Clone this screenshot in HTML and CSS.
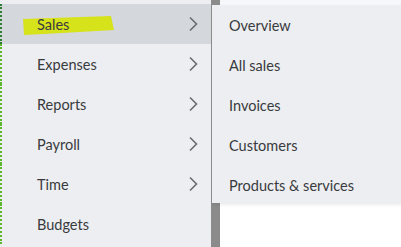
FILE: index.html
```html
<!DOCTYPE html>
<html lang="en">
<head>
    <meta charset="UTF-8">
    <title>Sales menu</title>
    <link rel="stylesheet" href="styles.css">
</head>
<body>

<div class="page">
    <nav class="menu">
        <a class="item active" href="#">
            <svg class="marker" width="94" height="20" viewBox="0 0 94 20"><polygon points="1,3 89,0 92,14 40,17 2,19" fill="#d6e21a"/></svg>
            <span class="label">Sales</span>
            <svg class="chev" width="10" height="16" viewBox="0 0 10 16"><path d="M2 1.5 L8.5 8 L2 14.5" fill="none" stroke="#6b6c72" stroke-width="1.6"/></svg>
        </a>
        <a class="item" href="#">
            <span class="label">Expenses</span>
            <svg class="chev" width="10" height="16" viewBox="0 0 10 16"><path d="M2 1.5 L8.5 8 L2 14.5" fill="none" stroke="#6b6c72" stroke-width="1.6"/></svg>
        </a>
        <a class="item" href="#">
            <span class="label">Reports</span>
            <svg class="chev" width="10" height="16" viewBox="0 0 10 16"><path d="M2 1.5 L8.5 8 L2 14.5" fill="none" stroke="#6b6c72" stroke-width="1.6"/></svg>
        </a>
        <a class="item" href="#">
            <span class="label">Payroll</span>
            <svg class="chev" width="10" height="16" viewBox="0 0 10 16"><path d="M2 1.5 L8.5 8 L2 14.5" fill="none" stroke="#6b6c72" stroke-width="1.6"/></svg>
        </a>
        <a class="item" href="#">
            <span class="label">Time</span>
            <svg class="chev" width="10" height="16" viewBox="0 0 10 16"><path d="M2 1.5 L8.5 8 L2 14.5" fill="none" stroke="#6b6c72" stroke-width="1.6"/></svg>
        </a>
        <a class="item" href="#">
            <span class="label">Budgets</span>
        </a>
    </nav>

    <div class="scrollbar"></div>

    <div class="right">
        <div class="topstrip"></div>
        <div class="submenu">
            <a href="#">Overview</a>
            <a href="#">All sales</a>
            <a href="#">Invoices</a>
            <a href="#">Customers</a>
            <a href="#">Products &amp; services</a>
        </div>
    </div>
</div>

</body>
</html>
```

FILE: styles.css
```css
body {
    margin: 0;
    background: #ffffff;
    font-family: "Lato", "Liberation Sans", sans-serif;
    color: #393a3d;
}

.page {
    display: flex;
    height: 247px;
    overflow: hidden;
}

.menu {
    width: 211px;
    flex: none;
    background: #eceef1;
    padding-top: 4px;
}

.item {
    position: relative;
    display: flex;
    align-items: center;
    height: 40px;
    padding-left: 35px;
    padding-right: 13px;
    border-left: 2px dotted #5cb82a;
    color: #393a3d;
    text-decoration: none;
    font-size: 14.5px;
}

.item.active {
    background: #d4d7dc;
    border-left-color: #2f7d32;
}

.label {
    position: relative;
    flex: 1;
}

.marker {
    position: absolute;
    left: 20px;
    top: 12px;
}

.chev {
    flex: none;
}

.scrollbar {
    width: 9px;
    flex: none;
    background: #8b8b8b;
}

.right {
    flex: 1;
    margin-left: -9px;
    position: relative;
}

.topstrip {
    height: 5px;
    margin-left: 9px;
    background: #f6f7fb;
}

.submenu {
    background: #eceef1;
    border-left: 1px solid #8b8b8b;
    padding-left: 17px;
    height: 198px;
    box-shadow: 2px 2px 3px rgba(0, 0, 0, 0.08);
}

.submenu a {
    display: flex;
    align-items: center;
    height: 40px;
    color: #393a3d;
    text-decoration: none;
    font-size: 14.5px;
}
```
